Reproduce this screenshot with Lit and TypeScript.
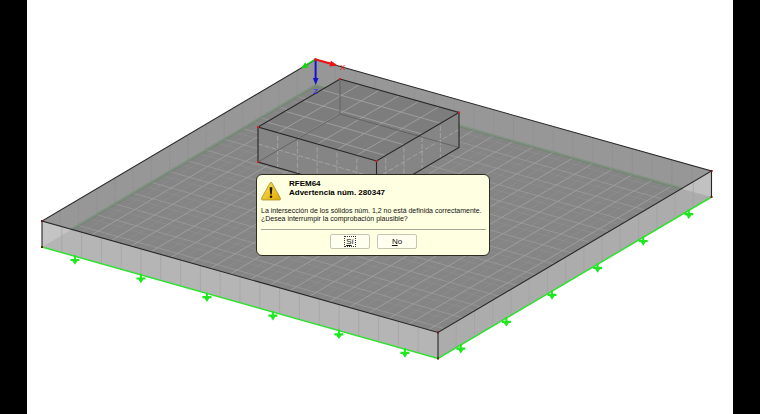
import { LitElement, html, svg, css } from "lit";
import { customElement } from "lit/decorators.js";

type Point = [number, number];

// Isometric basis of the slab: origin corner and the two full edge vectors.
const ORIGIN: Point = [288.5, 59.5];
const EDGE_X: Point = [396, 111.5];
const EDGE_Y: Point = [-273.5, 161.5];
const SLAB_DEPTH = 26;
const BOX_DEPTH = 35;
const STEP_U = 1 / 20;
const STEP_V = 1 / 15;

const project = (u: number, v: number, z = 0): Point => [
  ORIGIN[0] + u * EDGE_X[0] + v * EDGE_Y[0],
  ORIGIN[1] + u * EDGE_X[1] + v * EDGE_Y[1] + z,
];
const poly = (...pts: Point[]) => pts.map((p) => p.map((n) => n.toFixed(1)).join(",")).join(" ");
const segment = (a: Point, b: Point) => `M${poly(a)}L${poly(b)}`;

const linesAcross = (u0: number, v0: number, u1: number, v1: number, z: number) => {
  let d = "";
  for (let u = u0 + STEP_U; u < u1 - 0.001; u += STEP_U) d += segment(project(u, v0, z), project(u, v1, z));
  return d;
};
const linesAlong = (u0: number, v0: number, u1: number, v1: number, z: number) => {
  let d = "";
  for (let v = v0 + STEP_V; v < v1 - 0.001; v += STEP_V) d += segment(project(u0, v, z), project(u1, v, z));
  return d;
};

const wallPath = (along: "u" | "v", fixed: number, from: number, to: number, z0: number, z1: number) => {
  let d = "";
  const step = along === "u" ? STEP_U : STEP_V;
  for (let t = from + step; t < to - 0.001; t += step) {
    const at = (z: number) => (along === "u" ? project(t, fixed, z) : project(fixed, t, z));
    d += segment(at(z0), at(z1));
  }
  return d;
};

@customElement("model-view")
export class ModelView extends LitElement {
  static styles = css`
    :host { display: block; }
    .scene { display: block; width: 100%; height: auto; }
    .top { fill: #858585; }
    .band { fill: #979797; }
    .front { fill: #b5b5b5; }
    .side { fill: #acacac; }
    .end { fill: #cfcfcf; opacity: 0.6; }
    .grid, .edge, .rim, .wall, .hidden, .haze { fill: none; }
    .grid { stroke: #a0a0a0; stroke-width: 0.9; }
    .grid-soft { opacity: 0.75; }
    .grid-faint { opacity: 0.3; }
    .wall { stroke: #a2a2a2; stroke-width: 0.7; }
    .wall-faint { opacity: 0.4; stroke: #858585; }
    .haze { stroke: #5c8a5c; stroke-width: 3; opacity: 0.35; }
    .edge { stroke: #262626; stroke-width: 1.1; }
    .hidden { stroke: #5a5a5a; stroke-width: 0.8; }
    .rim { stroke: #30e030; stroke-width: 1.5; }
    .box-top { fill: #7d7d7d; }
    .box-side { fill: #858585; }
    .mesh { fill: none; stroke: #b4b4b4; stroke-width: 0.8; stroke-dasharray: 5 2; opacity: 0.8; }
    .support { fill: #20e820; }
    .node { fill: #701818; }
    .node-red { fill: #d02020; }
    .axis-x { fill: #f01010; }
    .axis-y { fill: #10d810; }
    .axis-z { fill: #1414d0; }
    .label { font: 8px "Liberation Sans", Arial, sans-serif; }
    .label-z { fill: #2a2aff; }
  `;

  private support([x, y]: Point) {
    return svg`<path class="support" transform="translate(${x.toFixed(1)} ${y.toFixed(1)})"
      d="M-1-1H1V2.600H4.500V4.800H2.500L0 8.500L-2.500 4.800H-4.500V2.600H-1Z"/>`;
  }

  render() {
    const [t, r, f, l] = [project(0, 0), project(1, 0), project(1, 1), project(0, 1)];
    const down = ([x, y]: Point, z = SLAB_DEPTH): Point => [x, y + z];
    const b0: Point = [313, 79];
    const b1: Point = [432, 112.5];
    const b2: Point = [349.5, 161];
    const b3: Point = [231, 127];
    const u0 = 0.098;
    const v0 = 0.053;
    const ratios = [0, 1, 2, 3, 4, 5].map((i) => 0.083 + i * 0.1667);
    return html`
      <svg class="scene" viewBox="0 0 706 414" role="img" aria-label="Modelo de sólidos">
        <defs>
          <clipPath id="slab"><polygon points=${poly(t, r, f, l)} /></clipPath>
        </defs>
        <polygon class="front" points=${poly(l, f, down(f), down(l))} />
        <polygon class="side" points=${poly(r, f, down(f), down(r))} />
        <polygon class="end" points=${poly(l, down(l), project(0.075, 1))} />
        <polygon class="end" points=${poly(r, down(r), project(1, 0.11))} />
        <path class="wall" d=${wallPath("u", 1, 0, 1, 0, SLAB_DEPTH)} />
        <path class="wall" d=${wallPath("v", 1, 0, 1, 0, SLAB_DEPTH)} />
        <g clip-path="url(#slab)">
          <polygon class="band" points=${poly(t, r, f, l)} />
          <polygon class="top" points=${poly(down(t), down(r), down(f), down(l))} />
          <path class="grid grid-faint" d=${linesAcross(0, 0, 1, 1, 0) + linesAlong(0, 0, 1, 1, 0)} />
          <path class="grid" d=${linesAcross(0, 0, 1, 1, SLAB_DEPTH)} />
          <path class="grid grid-soft" d=${linesAlong(0, 0, 1, 1, SLAB_DEPTH)} />
          <path class="wall wall-faint" d=${wallPath("u", 0, 0, 1, 0, SLAB_DEPTH)} />
          <path class="wall wall-faint" d=${wallPath("v", 0, 0, 1, 0, SLAB_DEPTH)} />
          <polyline class="haze" points=${poly(down(l), down(t), down(r))} />
        </g>
        <path class="rim" d=${`M${poly(down(l), down(f), down(r))}`} />
        <polygon class="edge" points=${poly(t, r, f, l)} />
        <path class="edge" d=${segment(l, down(l)) + segment(f, down(f)) + segment(r, down(r))} />

        <polygon class="box-side" points=${poly(b3, b2, down(b2, BOX_DEPTH), down(b3, BOX_DEPTH))} />
        <polygon class="box-side" points=${poly(b1, b2, down(b2, BOX_DEPTH), down(b1, BOX_DEPTH))} />
        <polygon class="box-top" points=${poly(b0, b1, b2, b3)} />
        <path class="grid" d=${linesAcross(u0, v0, u0 + 0.3, v0 + 0.3, 0) + linesAlong(u0, v0, u0 + 0.3, v0 + 0.3, 0)} />
        <path class="mesh" d=${wallPath("u", v0 + 0.3, u0, u0 + 0.3, 3, BOX_DEPTH) +
          wallPath("v", u0 + 0.3, v0, v0 + 0.3, 3, BOX_DEPTH) +
          segment(down(b3, 17), down(b2, 17)) + segment(down(b2, 17), down(b1, 17))} />
        <path class="hidden" d=${segment(b0, down(b0, BOX_DEPTH)) + segment(down(b0, BOX_DEPTH), down(b3, BOX_DEPTH)) +
          segment(down(b0, BOX_DEPTH), down(b1, BOX_DEPTH))} />
        <polygon class="edge" points=${poly(b0, b1, b2, b3)} />
        <path class="edge" d=${segment(b2, down(b2, BOX_DEPTH)) +
          `M${poly(b3, down(b3, BOX_DEPTH), down(b2, BOX_DEPTH), down(b1, BOX_DEPTH), b1)}`} />

        ${ratios.map((k) => this.support(project(k, 1, SLAB_DEPTH)))}
        ${ratios.map((k) => this.support(project(1, k, SLAB_DEPTH)))}
        ${[l, down(l), f, down(f), r, down(r)].map(([x, y]) =>
          svg`<rect class="node" x=${x - 1} y=${y - 1} width="2" height="2"/>`)}
        ${[b0, b1, b2, b3, down(b3, BOX_DEPTH)].map(([x, y]) =>
          svg`<rect class="node-red" x=${x - 1} y=${y - 1} width="2" height="2"/>`)}

        <path class="axis-y" d="M288 58.500L289 60L280 65L281.500 67.500L274 68.500L278 62.500L279.500 64Z" />
        <path class="axis-x" d="M289 58.500L303.500 62.500L304 60.800L310.500 65.500L302.500 66.500L303 64.500L288.500 60.500Z" />
        <path class="axis-z" d="M287.600 60H289.600V78H291.500L288.700 85L285.900 78H287.600Z" />
        <circle class="node-red" cx="288.500" cy="59.500" r="1.500" />
        <text class="label axis-x" x="313" y="70">X</text>
        <text class="label label-z" x="286" y="94">Z</text>
      </svg>
    `;
  }
}

@customElement("warning-dialog")
export class WarningDialog extends LitElement {
  static styles = css`
    :host { display: block; }
    .dialog {
      box-sizing: border-box;
      width: 234px;
      padding: 4px 3px 6px 4px;
      border: 1px solid #2c2c20;
      border-radius: 6px;
      background: #ffffe1;
      color: #111;
      font: 7px/8px "Liberation Sans", Arial, sans-serif;
    }
    .head { display: flex; align-items: flex-start; gap: 8px; }
    .icon { display: block; width: 20px; height: 22px; }
    .title { margin: 0; font: bold 8px/9px "Liberation Sans", Arial, sans-serif; color: #000; }
    .title span { display: block; }
    .text { margin: 6px 0; white-space: nowrap; }
    .text span { display: block; }
    .actions { display: flex; justify-content: center; gap: 7px; padding-top: 4px; border-top: 1px solid #a5a598; }
    .button {
      width: 40px;
      height: 15px;
      padding: 0;
      border: 1px solid #c6c6b4;
      border-radius: 2px;
      background: #fffff0;
      color: #111;
      font: 8px/9px "Liberation Sans", Arial, sans-serif;
    }
    .focus { display: inline-block; padding: 0 1px; outline: 1px dotted #333; }
    .face { fill: url(#gold); stroke: #a58a30; stroke-width: 0.8; stroke-linejoin: round; }
    .mark { fill: #1c1608; }
    .light { stop-color: #ffe45a; }
    .deep { stop-color: #dda800; }
  `;

  render() {
    return html`
      <section class="dialog" role="alertdialog" aria-labelledby="title" aria-describedby="text">
        <header class="head">
          <svg class="icon" viewBox="0 -2 20 22" aria-hidden="true">
            <defs>
              <linearGradient id="gold" x1="0" y1="0" x2="1" y2="1">
                <stop class="light" offset="0" /><stop class="deep" offset="1" />
              </linearGradient>
            </defs>
            <path class="face" d="M9 2Q10 0.500 11 2L19.300 17Q20 19 18.300 19H1.700Q0 19 0.700 17Z" />
            <path class="mark" d="M8.600 6.500Q10 5.500 11.400 6.500L10.700 13.500H9.300Z" />
            <circle class="mark" cx="10" cy="15.800" r="1.300" />
          </svg>
          <h1 class="title" id="title"><span>RFEM64</span><span>Advertencia núm. 280347</span></h1>
        </header>
        <p class="text" id="text">
          <span>La intersección de los sólidos núm. 1,2 no está definida correctamente.</span>
          <span>¿Desea interrumpir la comprobación plausible?</span>
        </p>
        <div class="actions">
          <button class="button" type="button"><span class="focus"><u>S</u>í</span></button>
          <button class="button" type="button"><u>N</u>o</button>
        </div>
      </section>
    `;
  }
}

@customElement("app-root")
export class AppRoot extends LitElement {
  static styles = css`
    :host { display: block; min-height: 100vh; padding: 0 27px; box-sizing: border-box; background: #000; }
    .viewport { position: relative; min-height: 100vh; background: #fff; }
    .popup { position: absolute; top: 174px; left: 229px; }
  `;

  render() {
    return html`
      <main class="viewport">
        <model-view></model-view>
        <warning-dialog class="popup"></warning-dialog>
      </main>
    `;
  }
}
